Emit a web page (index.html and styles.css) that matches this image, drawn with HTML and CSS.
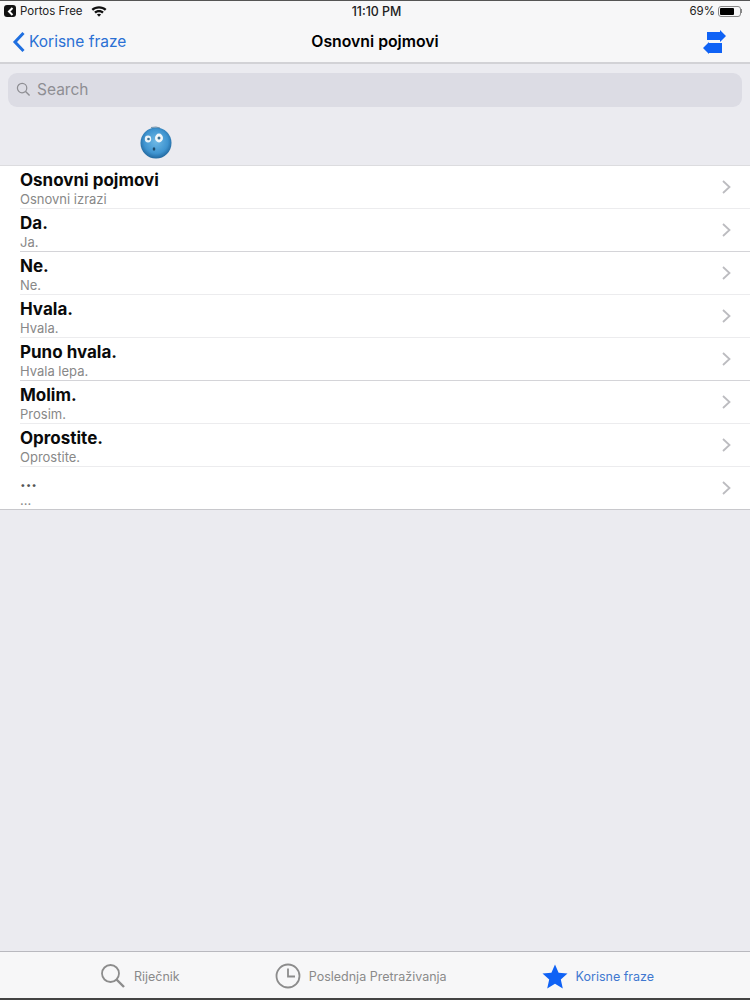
FILE: index.html
```html
<!DOCTYPE html>
<html lang="en">
<head>
    <meta charset="UTF-8">
    <title>Osnovni pojmovi</title>
    <link rel="stylesheet" href="styles.css">
</head>
<body>
    <div class="app">
        <!-- Status bar -->
        <div class="status">
            <div class="status-left">
                <span class="app-badge"><svg width="7" height="9" viewBox="0 0 7 9"><path d="M5.5 1 L2 4.5 L5.5 8" fill="none" stroke="#fff" stroke-width="2"/></svg></span>
                <span>Portos Free</span>
                <svg class="wifi" width="16" height="12" viewBox="0 0 16 12">
                    <path d="M0.5 4 C4.5 0.2 11.5 0.2 15.5 4 L13.9 5.7 C10.6 2.6 5.4 2.6 2.1 5.7 Z" fill="#111"/>
                    <path d="M3.2 6.8 C5.9 4.3 10.1 4.3 12.8 6.8 L11.2 8.4 C9.3 6.8 6.7 6.8 4.8 8.4 Z" fill="#111"/>
                    <path d="M5.9 9.5 C7.1 8.5 8.9 8.5 10.1 9.5 L8 11.7 Z" fill="#111"/>
                </svg>
            </div>
            <div class="status-time">11:10 PM</div>
            <div class="status-right">
                <span>69%</span>
                <span class="battery"><span class="battery-fill"></span></span>
                <span class="battery-tip"></span>
            </div>
        </div>

        <!-- Nav bar -->
        <div class="nav">
            <div class="nav-back">
                <svg width="14" height="22" viewBox="0 0 14 22"><path d="M11.5 2 L3 11 L11.5 20" fill="none" stroke="#1f6fe0" stroke-width="3"/></svg>
                <span>Korisne fraze</span>
            </div>
            <div class="nav-title">Osnovni pojmovi</div>
            <div class="nav-action">
                <svg width="24" height="25" viewBox="0 0 24 25">
                    <path d="M4 3 H17 V1 L23 7 L17 13 V11 H4 Z" fill="#0f62f5"/>
                    <path d="M19 14 H6 V13 L0 19 L6 25 V24 H19 Z" fill="#0f62f5"/>
                </svg>
            </div>
        </div>

        <!-- Search -->
        <div class="search-wrap">
            <div class="search">
                <svg width="15" height="15" viewBox="0 0 16 16">
                    <circle cx="6.5" cy="6.5" r="5" fill="none" stroke="#8e8e93" stroke-width="1.3"/>
                    <path d="M10.2 10.2 L14.5 14.5" stroke="#8e8e93" stroke-width="1.5"/>
                </svg>
                <span>Search</span>
            </div>
        </div>

        <!-- Section header with the face -->
        <div class="section-head">
            <svg class="face" width="34" height="34" viewBox="0 0 34 34">
                <defs>
                    <radialGradient id="faceFill" cx="50%" cy="45%" r="55%">
                        <stop offset="0%" stop-color="#6fb9e6"/>
                        <stop offset="70%" stop-color="#3f94d0"/>
                        <stop offset="100%" stop-color="#22689f"/>
                    </radialGradient>
                </defs>
                <circle cx="17" cy="17" r="15.5" fill="url(#faceFill)"/>
                <path d="M12 1.5 L17 1 L21 2" fill="none" stroke="#5a7f9a" stroke-width="0.8"/>
                <ellipse cx="9" cy="13" rx="3.2" ry="3.4" fill="#eaf3f8"/>
                <ellipse cx="20" cy="12" rx="4" ry="4.4" fill="#f2f7fa"/>
                <circle cx="9.5" cy="13" r="1.3" fill="#3a6f90"/>
                <circle cx="20" cy="12" r="1.5" fill="#3a6f90"/>
                <ellipse cx="15" cy="23" rx="1.3" ry="1.7" fill="#1d4a6b"/>
            </svg>
        </div>

        <!-- Phrases -->
        <div class="list">
            <div class="row">
                <div class="row-inner">
                    <div class="row-text"><div class="row-title">Osnovni pojmovi</div><div class="row-sub">Osnovni izrazi</div></div>
                    <svg class="chevron" width="9" height="14" viewBox="0 0 9 14"><path d="M1 1 L7.5 7 L1 13" fill="none" stroke="#bcbcc0" stroke-width="1.8"/></svg>
                </div>
            </div>
            <div class="row row-strong">
                <div class="row-inner">
                    <div class="row-text"><div class="row-title">Da.</div><div class="row-sub">Ja.</div></div>
                    <svg class="chevron" width="9" height="14" viewBox="0 0 9 14"><path d="M1 1 L7.5 7 L1 13" fill="none" stroke="#bcbcc0" stroke-width="1.8"/></svg>
                </div>
            </div>
            <div class="row">
                <div class="row-inner">
                    <div class="row-text"><div class="row-title">Ne.</div><div class="row-sub">Ne.</div></div>
                    <svg class="chevron" width="9" height="14" viewBox="0 0 9 14"><path d="M1 1 L7.5 7 L1 13" fill="none" stroke="#bcbcc0" stroke-width="1.8"/></svg>
                </div>
            </div>
            <div class="row">
                <div class="row-inner">
                    <div class="row-text"><div class="row-title">Hvala.</div><div class="row-sub">Hvala.</div></div>
                    <svg class="chevron" width="9" height="14" viewBox="0 0 9 14"><path d="M1 1 L7.5 7 L1 13" fill="none" stroke="#bcbcc0" stroke-width="1.8"/></svg>
                </div>
            </div>
            <div class="row row-strong">
                <div class="row-inner">
                    <div class="row-text"><div class="row-title">Puno hvala.</div><div class="row-sub">Hvala lepa.</div></div>
                    <svg class="chevron" width="9" height="14" viewBox="0 0 9 14"><path d="M1 1 L7.5 7 L1 13" fill="none" stroke="#bcbcc0" stroke-width="1.8"/></svg>
                </div>
            </div>
            <div class="row">
                <div class="row-inner">
                    <div class="row-text"><div class="row-title">Molim.</div><div class="row-sub">Prosim.</div></div>
                    <svg class="chevron" width="9" height="14" viewBox="0 0 9 14"><path d="M1 1 L7.5 7 L1 13" fill="none" stroke="#bcbcc0" stroke-width="1.8"/></svg>
                </div>
            </div>
            <div class="row">
                <div class="row-inner">
                    <div class="row-text"><div class="row-title">Oprostite.</div><div class="row-sub">Oprostite.</div></div>
                    <svg class="chevron" width="9" height="14" viewBox="0 0 9 14"><path d="M1 1 L7.5 7 L1 13" fill="none" stroke="#bcbcc0" stroke-width="1.8"/></svg>
                </div>
            </div>
            <div class="row row-last">
                <div class="row-inner">
                    <div class="row-text"><div class="row-title row-dots">...</div><div class="row-sub">...</div></div>
                    <svg class="chevron" width="9" height="14" viewBox="0 0 9 14"><path d="M1 1 L7.5 7 L1 13" fill="none" stroke="#bcbcc0" stroke-width="1.8"/></svg>
                </div>
            </div>
        </div>

        <div class="filler"></div>

        <!-- Tab bar -->
        <div class="tabs">
            <div class="tab">
                <svg width="26" height="26" viewBox="0 0 26 26">
                    <circle cx="10.5" cy="10.5" r="8.5" fill="none" stroke="#8c8c8c" stroke-width="1.8"/>
                    <path d="M16.5 16.5 L24 24" stroke="#8c8c8c" stroke-width="2.4"/>
                </svg>
                <span>Riječnik</span>
            </div>
            <div class="tab">
                <svg width="26" height="26" viewBox="0 0 26 26">
                    <circle cx="13" cy="13" r="11.5" fill="none" stroke="#8c8c8c" stroke-width="1.8"/>
                    <path d="M13 5.5 V13.5 H20" fill="none" stroke="#8c8c8c" stroke-width="1.8"/>
                </svg>
                <span>Poslednja Pretraživanja</span>
            </div>
            <div class="tab active">
                <svg width="26" height="25" viewBox="0 0 26 25">
                    <path d="M13 0.5 L16.6 8.8 L25.5 9.6 L18.8 15.6 L20.8 24.5 L13 19.8 L5.2 24.5 L7.2 15.6 L0.5 9.6 L9.4 8.8 Z" fill="#0f62f5"/>
                </svg>
                <span>Korisne fraze</span>
            </div>
        </div>
    </div>
</body>
</html>
```

FILE: styles.css
```css
* {
    box-sizing: border-box;
}

body {
    margin: 0;
    background: #ebebf0;
    font-family: "Inter", "Liberation Sans", sans-serif;
    color: #000;
}

.app {
    width: 750px;
    height: 1000px;
    display: flex;
    flex-direction: column;
    overflow: hidden;
    border-top: 1px solid #555;
    border-bottom: 2px solid #444;
}

/* Status bar */
.status {
    height: 20px;
    background: #f7f7f8;
    display: flex;
    align-items: center;
    justify-content: space-between;
    font-size: 11.5px;
    color: #222;
    padding: 0 8px 0 4px;
    position: relative;
}

.status-left {
    display: flex;
    align-items: center;
    gap: 4px;
}

.app-badge {
    width: 12px;
    height: 12px;
    background: #111;
    border-radius: 3px;
    display: flex;
    align-items: center;
    justify-content: center;
}

.wifi {
    margin-left: 4px;
}

.status-time {
    position: absolute;
    left: 3px;
    right: 0;
    text-align: center;
    font-size: 12.4px;
    font-weight: 500;
    pointer-events: none;
}

.status-right {
    display: flex;
    align-items: center;
    gap: 3px;
    font-size: 11.5px;
}

.battery {
    width: 23px;
    height: 11px;
    border: 1px solid #888;
    border-radius: 3px;
    padding: 1px;
    display: block;
}

.battery-fill {
    display: block;
    width: 14px;
    height: 7px;
    background: #000;
    border-radius: 1px;
}

.battery-tip {
    width: 1px;
    height: 4px;
    background: #888;
    margin-left: -3px;
}

/* Nav */
.nav {
    height: 43px;
    background: #f7f7f8;
    border-bottom: 2px solid #d2d2d6;
    display: flex;
    align-items: center;
    justify-content: space-between;
    padding: 0 23px 0 12px;
    position: relative;
}

.nav-back {
    display: flex;
    align-items: center;
    gap: 3px;
    color: #2a70d4;
    font-size: 15.5px;
}

.nav-title {
    position: absolute;
    left: 0;
    right: 0;
    text-align: center;
    font-size: 15.8px;
    font-weight: 600;
}

.nav-action {
    display: flex;
}

/* Search */
.search-wrap {
    height: 53px;
    padding: 9px 8px 0;
}

.search {
    height: 34px;
    background: #dcdce4;
    border-radius: 9px;
    display: flex;
    align-items: center;
    gap: 6px;
    padding: 0 0 2px 8px;
    color: #8e8e93;
    font-size: 15.5px;
}

/* Section head */
.section-head {
    height: 49px;
    border-bottom: 1px solid #dcdcdf;
    padding: 9px 0 0 139px;
}

.face {
    display: block;
}

/* List */
.list {
    background: #fff;
    border-bottom: 1px solid #c8c8cc;
}

.row {
    height: 43px;
    padding-left: 20px;
}

.row-last {
    height: 42px;
}

.row-inner {
    height: 100%;
    padding-right: 19px;
    display: flex;
    align-items: center;
    justify-content: space-between;
    border-bottom: 1px solid #ececee;
}

.row-strong .row-inner {
    border-bottom-color: #d4d4d8;
}

.row-last .row-inner {
    border-bottom: none;
}

.row-text {
    height: 100%;
    padding-top: 4px;
}

.row-title {
    font-size: 17px;
    line-height: 21px;
    font-weight: 700;
    color: #0a0a0a;
}

.row-dots {
    color: #555;
}

.row-sub {
    font-size: 13px;
    line-height: 16px;
    color: #888;
}

.filler {
    flex: 1;
}

/* Tabs */
.tabs {
    height: 47px;
    padding: 2px 0 0 4px;
    background: #f7f7f8;
    border-top: 1px solid #b9b9bf;
    display: flex;
    align-items: center;
    justify-content: center;
    gap: 95px;
    font-size: 12.5px;
    color: #8a8a8a;
}

.tab {
    display: flex;
    align-items: center;
    gap: 8px;
}

.tab.active {
    color: #3f78d0;
}
```
